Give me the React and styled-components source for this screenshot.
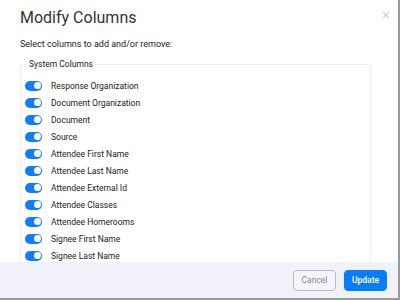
import styled, { createGlobalStyle } from "styled-components";

const GlobalStyle = createGlobalStyle`
  html, body {
    margin: 0;
    padding: 0;
    background: #9a9a9a;
    font-family: Roboto, "Liberation Sans", Arial, sans-serif;
  }
`;

const Modal = styled.div`
  width: 398px;
  height: 298px;
  background: #ffffff;
  display: flex;
  flex-direction: column;
  overflow: hidden;
  position: relative;
`;

const Header = styled.div`
  padding: 8px 20px 0 20px;
`;

const Title = styled.h1`
  margin: 0;
  font-size: 16px;
  font-weight: 400;
  color: #333333;
  line-height: 20px;
`;

const Close = styled.span`
  position: absolute;
  top: 10px;
  right: 8px;
  width: 9px;
  height: 9px;
  display: flex;
  align-items: center;
  justify-content: center;
`;

const Body = styled.div`
  flex: 1;
  padding: 10px 27px 0 20px;
  overflow: hidden;
`;

const Hint = styled.p`
  margin: 0 0 9px 0;
  font-size: 9px;
  color: #222;
  line-height: 12px;
`;

const Fieldset = styled.fieldset`
  margin: 0;
  padding: 8px 6px 20px 4px;
  border: 1px solid #eeeeee;
  border-radius: 2px;
`;

const Legend = styled.legend`
  margin-left: 2px;
  padding: 0 2px;
  font-size: 8.5px;
  color: #222;
`;

const Row = styled.div`
  display: flex;
  align-items: center;
  height: 17px;
  gap: 9px;
`;

const Toggle = styled.span`
  width: 17px;
  height: 10px;
  border-radius: 5px;
  background: ${(p) => (p.on ? "#127df4" : "#c5c9d2")};
  position: relative;
  flex: none;
  &::after {
    content: "";
    position: absolute;
    top: 1.5px;
    left: ${(p) => (p.on ? "8.5px" : "1.5px")};
    width: 7px;
    height: 7px;
    border-radius: 50%;
    background: #ffffff;
  }
`;

const Label = styled.span`
  font-size: 8.5px;
  color: #222;
`;

const Footer = styled.div`
  height: 36px;
  background: #f1f1fa;
  display: flex;
  align-items: center;
  justify-content: flex-end;
  gap: 8px;
  padding: 0 11px;
  flex: none;
`;

const Button = styled.button`
  width: 43px;
  height: 21px;
  border-radius: 4px;
  font-family: Roboto, "Liberation Sans", Arial, sans-serif;
  font-size: 8.5px;
  padding: 0;
  cursor: pointer;
  border: 1px solid ${(p) => (p.primary ? "#0a7cf6" : "#b8bcc6")};
  background: ${(p) => (p.primary ? "#0a7cf6" : "#f4f5fa")};
  color: ${(p) => (p.primary ? "#ffffff" : "#858994")};
  font-weight: ${(p) => (p.primary ? 500 : 400)};
`;

const Page = styled.div`
  display: flex;
`;

const columns = [
  "Response Organization",
  "Document Organization",
  "Document",
  "Source",
  "Attendee First Name",
  "Attendee Last Name",
  "Attendee External Id",
  "Attendee Classes",
  "Attendee Homerooms",
  "Signee First Name",
  "Signee Last Name",
];

const App = () => {
  return (
    <Page>
      <GlobalStyle />
      <Modal>
        <Header>
          <Title>Modify Columns</Title>
        </Header>
        <Close>
          <svg width="8" height="8" viewBox="0 0 8 8">
            <path d="M1 1L7 7M7 1L1 7" stroke="#c9ced8" strokeWidth="1.3" />
          </svg>
        </Close>
        <Body>
          <Hint>Select columns to add and/or remove:</Hint>
          <Fieldset>
            <Legend>System Columns</Legend>
            {columns.map((c) => (
              <Row key={c}>
                <Toggle on />
                <Label>{c}</Label>
              </Row>
            ))}
          </Fieldset>
        </Body>
        <Footer>
          <Button>Cancel</Button>
          <Button primary>Update</Button>
        </Footer>
      </Modal>
    </Page>
  );
};

export default App;
